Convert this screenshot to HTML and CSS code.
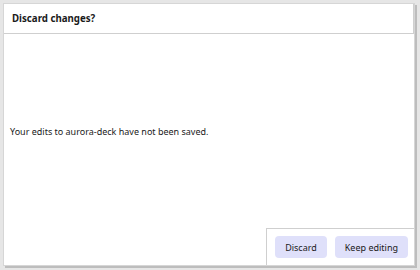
FILE: index.html
```html
<!DOCTYPE html>
<html lang="en">
<head>
  <meta charset="UTF-8">
  <title>Discard changes?</title>
  <link rel="stylesheet" href="styles.css">
</head>
<body>
<div class="dialog">
  <div class="header">Discard changes?</div>
  <div class="content">
    <p class="message">Your edits to aurora-deck have not been saved.</p>
  </div>
  <div class="footer">
    <button class="btn">Discard</button>
    <button class="btn">Keep editing</button>
  </div>
</div>
</body>
</html>
```

FILE: styles.css
```css
*{
  margin: 0;
  padding: 0;
  box-sizing: border-box;
}
html, body{
  width: 420px;
  height: 270px;
}
body{
  background-color: #e6e6e6;
  padding: 3px 5px 4px 3px;
  font-family: "Noto Sans", "Open Sans", sans-serif;
  color: #1a1a1a;
}
.dialog{
  display: flex;
  flex-direction: column;
  height: 100%;
  background-color: #ffffff;
  border: 1px solid #d6d6d6;
  box-shadow: 2px 2px 0 #bdbdbd;
}
.header{
  height: 30px;
  padding: 0 8px;
  display: flex;
  align-items: center;
  font-size: 9.7px;
  font-weight: bold;
  border-bottom: 1px solid #cfcfcf;
  border-right: 1px solid #cfcfcf;
}
.content{
  flex: 1;
  display: flex;
  align-items: center;
  padding: 0 6px;
}
.message{
  font-size: 9px;
}
.footer{
  align-self: flex-end;
  display: flex;
  gap: 8px;
  padding: 7px 6px 7px 8px;
  border-top: 1px solid #cfcfcf;
  border-left: 1px solid #cfcfcf;
}
.btn{
  height: 22px;
  padding: 0 10px;
  border: none;
  border-radius: 4px;
  background-color: #dfe0fa;
  color: #1a1a1a;
  font-family: "Noto Sans", "Open Sans", sans-serif;
  font-size: 9px;
}
```
